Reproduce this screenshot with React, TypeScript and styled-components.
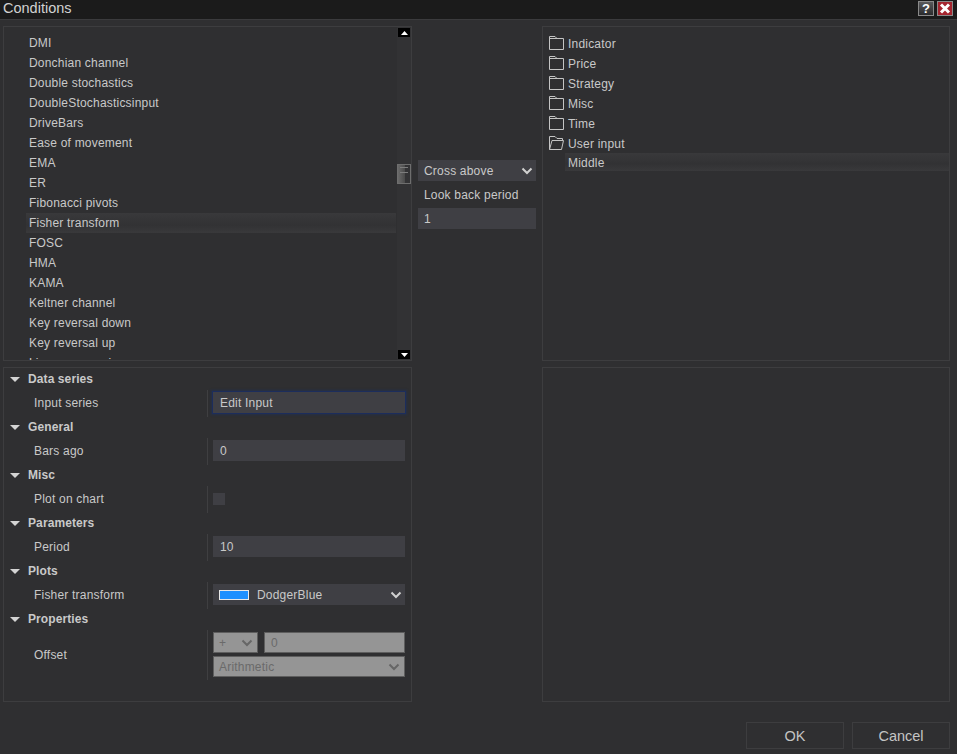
import React from "react";
import styled, { createGlobalStyle } from "styled-components";

const Global = createGlobalStyle`
  html, body { margin: 0; padding: 0; background: #2f2f31; }
  * { box-sizing: border-box; }
  #root { width: 957px; height: 754px; overflow: hidden; }
`;

const Window = styled.div`
  width: 957px;
  height: 754px;
  display: flex;
  flex-direction: column;
  background: #2f2f31;
  color: #c9c9c9;
  font-family: "Liberation Sans", Arial, sans-serif;
  font-size: 12px;
`;

const TitleBar = styled.div`
  height: 20px;
  flex: none;
  display: flex;
  align-items: center;
  justify-content: space-between;
  padding: 0 4px 2px 3px;
  background: #1b1b1b;
  border-bottom: 1px solid #3b3b3d;
`;

const Title = styled.div`
  font-size: 14.5px;
  color: #d2d2d2;
  margin-top: -2px;
`;

const TitleButtons = styled.div`
  display: flex;
  gap: 3px;
`;

const HelpButton = styled.div`
  width: 16px;
  height: 15px;
  display: flex;
  align-items: center;
  justify-content: center;
  background: linear-gradient(#5a5a5c, #2a2a2c);
  border: 1px solid #8a8a8a;
  color: #fff;
  font-weight: bold;
  font-size: 13px;
`;

const CloseButton = styled.div`
  width: 16px;
  height: 15px;
  display: flex;
  align-items: center;
  justify-content: center;
  background: #a5252f;
  border: 1px solid #8a8a8a;
`;

const Main = styled.div`
  flex: none;
  display: grid;
  grid-template-columns: 409px 118px 408px;
  grid-template-rows: 335px 335px;
  column-gap: 6px;
  row-gap: 6px;
  margin: 6px 0 0 3px;
`;

const Panel = styled.div`
  border: 1px solid #3d3d3f;
  overflow: hidden;
  min-height: 0;
`;

const ListPanel = styled(Panel)`
  display: flex;
`;

const List = styled.div`
  flex: 1;
  padding: 6px 1px 0 22px;
  overflow: hidden;
`;

const ListItem = styled.div<{ $selected?: boolean }>`
  height: 20px;
  line-height: 20px;
  padding-left: 3px;
  letter-spacing: 0.2px;
  background: ${(p) => (p.$selected ? "linear-gradient(#39393b, #323234 60%, #39393b)" : "transparent")};
`;

const Scrollbar = styled.div`
  width: 14px;
  flex: none;
  display: flex;
  flex-direction: column;
  background: #323234;
  padding-top: 1px;
`;

const ArrowButton = styled.div<{ $down?: boolean }>`
  width: 12px;
  height: 9px;
  margin-left: 1px;
  flex: none;
  background: #000;
  display: flex;
  align-items: center;
  justify-content: center;
  margin-top: ${(p) => (p.$down ? "auto" : "0")};
  margin-bottom: ${(p) => (p.$down ? "1px" : "0")};
`;

const Thumb = styled.div`
  width: 14px;
  height: 20px;
  margin-top: 127px;
  flex: none;
  border: 1px solid #6e6e6e;
  background: linear-gradient(90deg, #6a6a6a, #4c4c4c 55%, #333335 58%);
  position: relative;
  &::before {
    content: "";
    position: absolute;
    left: 2px;
    right: 2px;
    top: 2px;
    height: 4px;
    border-top: 1px solid #7d7d7d;
    border-bottom: 1px solid #7d7d7d;
  }
`;

const Middle = styled.div`
  display: flex;
  flex-direction: column;
  justify-content: center;
  padding-top: 2px;
`;

const FieldBase = styled.div`
  height: 21px;
  line-height: 22px;
  background: #3f3f44;
  padding-left: 6px;
  letter-spacing: 0.2px;
`;

const SelectField = styled(FieldBase)`
  display: flex;
  align-items: center;
  justify-content: space-between;
  padding-right: 3px;
`;

const MidLabel = styled.div`
  height: 27px;
  line-height: 28px;
  padding-left: 6px;
  letter-spacing: 0.2px;
`;

const TreePanel = styled(Panel)`
  padding: 6px 0 0 6px;
`;

const TreeRow = styled.div`
  height: 20px;
  display: flex;
  align-items: center;
  gap: 4px;
  letter-spacing: 0.2px;
`;

const TreeLabel = styled.span`
  padding-top: 2px;
`;

const TreeChild = styled.div`
  height: 18px;
  line-height: 20px;
  margin-left: 16px;
  padding-left: 3px;
  letter-spacing: 0.2px;
  background: linear-gradient(#39393b, #323234 60%, #39393b);
`;

const PropPanel = styled(Panel)`
  display: flex;
  flex-direction: column;
  & > :first-child {
    margin-top: -1px;
  }
`;

const CategoryRow = styled.div`
  height: 24px;
  flex: none;
  display: flex;
  align-items: center;
  padding-left: 6px;
  gap: 8px;
  font-weight: bold;
  letter-spacing: 0.1px;
`;

const Triangle = styled.span`
  width: 0;
  height: 0;
  border-left: 5px solid transparent;
  border-right: 5px solid transparent;
  border-top: 5px solid #d4d4d4;
`;

const PropRow = styled.div<{ $tall?: boolean }>`
  height: ${(p) => (p.$tall ? "48px" : "24px")};
  flex: none;
  display: grid;
  grid-template-columns: 203px 1fr;
  grid-template-rows: ${(p) => (p.$tall ? "48px" : "24px")};
  align-items: center;
`;

const PropLabel = styled.div`
  padding-left: 30px;
  letter-spacing: 0.2px;
`;

const PropValue = styled.div<{ $tall?: boolean }>`
  height: ${(p) => (p.$tall ? "50px" : "27px")};
  border-left: 1px solid #3f3f41;
  padding: 0 6px ${(p) => (p.$tall ? "2px" : "1px")} 5px;
  display: flex;
  flex-direction: column;
  justify-content: center;
  gap: 3px;
`;

const PropField = styled(FieldBase)`
  padding-left: 7px;
`;

const FocusedField = styled(PropField)`
  box-shadow: 0 0 0 1px #1c2d5c, 0 0 2px 2px #24304a;
`;

const CheckBox = styled.div`
  width: 12px;
  height: 12px;
  background: #3f3f44;
`;

const ColorSelect = styled(SelectField)`
  justify-content: flex-start;
  gap: 8px;
`;

const Swatch = styled.div`
  width: 30px;
  height: 10px;
  background: #1e90ff;
  border: 1px solid #e8e8e8;
`;

const Grow = styled.div`
  flex: 1;
`;

const DisabledRow = styled.div`
  display: flex;
  gap: 6px;
`;

const DisabledField = styled.div<{ $width?: string; $grow?: boolean }>`
  height: 21px;
  flex: ${(p) => (p.$grow ? "1" : "none")};
  width: ${(p) => p.$width || "auto"};
  background: #959595;
  border: 1px solid #5e5e5e;
  color: #6a6a6a;
  padding: 1px 4px 0 ${(p) => (p.$grow ? "6px" : "5px")};
  display: flex;
  align-items: center;
  justify-content: space-between;
  letter-spacing: 0.2px;
`;

const Footer = styled.div`
  display: flex;
  justify-content: flex-end;
  gap: 8px;
  padding: 20px 7px 0 0;
`;

const FooterButton = styled.div`
  width: 98px;
  height: 27px;
  display: flex;
  align-items: center;
  justify-content: center;
  border: 1px solid #3d3d3f;
  font-size: 14.5px;
  color: #c4c4c4;
`;

const Chevron = ({ color = "#d0d0d0" }: { color?: string }) => (
  <svg width="12" height="8" viewBox="0 0 12 8" fill="none">
    <path d="M1.5 1.5 L6 6 L10.5 1.5" stroke={color} strokeWidth="2" />
  </svg>
);

const FolderClosed = () => (
  <svg width="15" height="14" viewBox="0 0 15 14" fill="none" stroke="#c4c4c4" strokeWidth="1">
    <path d="M0.5 13.5 V0.5 H6 L8 2.5 H14.5 V13.5 Z" />
    <path d="M0.5 2.5 H8" />
  </svg>
);

const FolderOpen = () => (
  <svg width="15" height="14" viewBox="0 0 15 14" fill="none" stroke="#c4c4c4" strokeWidth="1">
    <path d="M0.5 13.5 V0.5 H6 L8 2.5 H13.5 V4.5" />
    <path d="M0.5 13.5 H12.5 L14.5 4.5 H3 L0.5 13.5 Z" />
  </svg>
);

const items = [
  "DMI", "Donchian channel", "Double stochastics", "DoubleStochasticsinput", "DriveBars",
  "Ease of movement", "EMA", "ER", "Fibonacci pivots", "Fisher transform", "FOSC", "HMA",
  "KAMA", "Keltner channel", "Key reversal down", "Key reversal up", "Linear regression",
];

const folders = ["Indicator", "Price", "Strategy", "Misc", "Time"];

export default function App() {
  return (
    <Window>
      <Global />
      <TitleBar>
        <Title>Conditions</Title>
        <TitleButtons>
          <HelpButton>?</HelpButton>
          <CloseButton>
            <svg width="12" height="11" viewBox="0 0 12 11">
              <path d="M2 1.5 L10 9.5 M10 1.5 L2 9.5" stroke="#fff" strokeWidth="3" />
            </svg>
          </CloseButton>
        </TitleButtons>
      </TitleBar>
      <Main>
        <ListPanel>
          <List>
            {items.map((t) => (
              <ListItem key={t} $selected={t === "Fisher transform"}>{t}</ListItem>
            ))}
          </List>
          <Scrollbar>
            <ArrowButton>
              <svg width="7" height="4" viewBox="0 0 7 4"><path d="M3.5 0 L7 4 H0 Z" fill="#fff" /></svg>
            </ArrowButton>
            <Thumb />
            <ArrowButton $down>
              <svg width="7" height="4" viewBox="0 0 7 4"><path d="M0 0 H7 L3.5 4 Z" fill="#fff" /></svg>
            </ArrowButton>
          </Scrollbar>
        </ListPanel>
        <Middle>
          <SelectField>Cross above<Chevron /></SelectField>
          <MidLabel>Look back period</MidLabel>
          <FieldBase>1</FieldBase>
        </Middle>
        <TreePanel>
          {folders.map((f) => (
            <TreeRow key={f}><FolderClosed /><TreeLabel>{f}</TreeLabel></TreeRow>
          ))}
          <TreeRow><FolderOpen /><TreeLabel>User input</TreeLabel></TreeRow>
          <TreeChild>Middle</TreeChild>
        </TreePanel>
        <PropPanel>
          <CategoryRow><Triangle />Data series</CategoryRow>
          <PropRow>
            <PropLabel>Input series</PropLabel>
            <PropValue><FocusedField>Edit Input</FocusedField></PropValue>
          </PropRow>
          <CategoryRow><Triangle />General</CategoryRow>
          <PropRow>
            <PropLabel>Bars ago</PropLabel>
            <PropValue><PropField>0</PropField></PropValue>
          </PropRow>
          <CategoryRow><Triangle />Misc</CategoryRow>
          <PropRow>
            <PropLabel>Plot on chart</PropLabel>
            <PropValue><CheckBox /></PropValue>
          </PropRow>
          <CategoryRow><Triangle />Parameters</CategoryRow>
          <PropRow>
            <PropLabel>Period</PropLabel>
            <PropValue><PropField>10</PropField></PropValue>
          </PropRow>
          <CategoryRow><Triangle />Plots</CategoryRow>
          <PropRow>
            <PropLabel>Fisher transform</PropLabel>
            <PropValue>
              <ColorSelect><Swatch />DodgerBlue<Grow /><Chevron /></ColorSelect>
            </PropValue>
          </PropRow>
          <CategoryRow><Triangle />Properties</CategoryRow>
          <PropRow $tall>
            <PropLabel>Offset</PropLabel>
            <PropValue $tall>
              <DisabledRow>
                <DisabledField $width="45px">+<Chevron color="#666" /></DisabledField>
                <DisabledField $grow>0</DisabledField>
              </DisabledRow>
              <DisabledField>Arithmetic<Chevron color="#666" /></DisabledField>
            </PropValue>
          </PropRow>
        </PropPanel>
        <div />
        <Panel />
      </Main>
      <Footer>
        <FooterButton>OK</FooterButton>
        <FooterButton>Cancel</FooterButton>
      </Footer>
    </Window>
  );
}
